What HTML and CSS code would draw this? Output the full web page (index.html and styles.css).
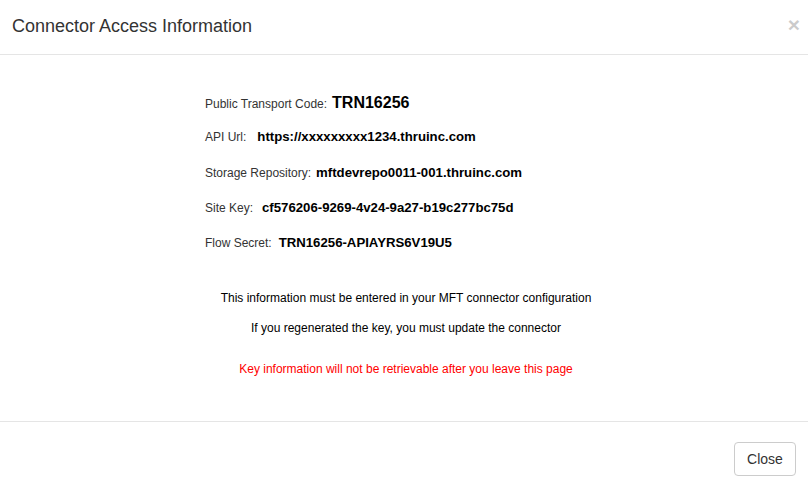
FILE: index.html
```html
<!DOCTYPE html>
<html>
<head>
<meta charset="utf-8">
<link rel="stylesheet" href="styles.css">
</head>
<body>
<div class="modal">
  <div class="modal-header">
    <h4 class="modal-title">Connector Access Information</h4>
    <button class="close" type="button">&times;</button>
  </div>
  <div class="modal-body">
    <div class="info">
      <div class="row"><span class="label">Public Transport Code:</span><span class="value big gap-1">TRN16256</span></div>
      <div class="row"><span class="label">API Url:</span><span class="value gap-api">https://xxxxxxxxx1234.thruinc.com</span></div>
      <div class="row"><span class="label">Storage Repository:</span><span class="value gap-1">mftdevrepo0011-001.thruinc.com</span></div>
      <div class="row"><span class="label">Site Key:</span><span class="value gap-site">cf576206-9269-4v24-9a27-b19c277bc75d</span></div>
      <div class="row"><span class="label">Flow Secret:</span><span class="value gap-flow">TRN16256-APIAYRS6V19U5</span></div>
    </div>
    <p class="note first">This information must be entered in your MFT connector configuration</p>
    <p class="note">If you regenerated the key, you must update the connector</p>
    <p class="note warn">Key information will not be retrievable after you leave this page</p>
  </div>
  <div class="modal-footer">
    <button class="btn" type="button">Close</button>
  </div>
</div>
</body>
</html>
```
FILE: styles.css
```css
* { box-sizing: border-box; }
html, body { margin: 0; padding: 0; background: #fff; }
body {
  font-family: "Liberation Sans", Arial, sans-serif;
  color: #333;
  font-size: 12px;
  width: 808px;
  height: 492px;
  overflow: hidden;
}
.modal { display: flex; flex-direction: column; height: 492px; }
.modal-header {
  display: flex;
  justify-content: space-between;
  align-items: flex-start;
  padding: 14px 8px 14px 12px;
  border-bottom: 1px solid #e5e5e5;
  height: 55px;
}
.modal-title {
  margin: 0;
  font-size: 18px;
  font-weight: normal;
  line-height: 25.7px;
}
.close {
  background: none;
  border: 0;
  padding: 0;
  font-family: "Liberation Sans", Arial, sans-serif;
  font-size: 21px;
  font-weight: bold;
  line-height: 1;
  color: #000;
  opacity: 0.2;
}
.modal-body {
  height: 366px;
  padding: 0;
}
.info {
  margin-left: 205px;
  padding-top: 39px;
}
.row {
  display: flex;
  align-items: baseline;
  height: 35.3px;
}
.label { font-size: 12px; color: #333; }
.value { font-size: 13.2px; font-weight: bold; color: #000; }
.value.big { font-size: 16px; }
.gap-1 { margin-left: 5px; }
.gap-api { margin-left: 11px; }
.gap-site { margin-left: 9px; }
.gap-flow { margin-left: 7px; }
.note {
  margin: 0;
  text-align: center;
  font-size: 12px;
  color: #000;
  line-height: 17px;
  height: 30px;
  padding-left: 4px;
}
.note.first { margin-top: 20px; }
.note.warn { color: #ff0000; margin-top: 11px; }
.modal-footer {
  border-top: 1px solid #e5e5e5;
  display: flex;
  justify-content: flex-end;
  padding: 20px 12px 15px;
}
.btn {
  font-family: "Liberation Sans", Arial, sans-serif;
  font-size: 14px;
  line-height: 20px;
  padding: 6px 12px;
  height: 34px;
  width: 62px;
  color: #333;
  background: #fff;
  border: 1px solid #ccc;
  border-radius: 4px;
}
```
